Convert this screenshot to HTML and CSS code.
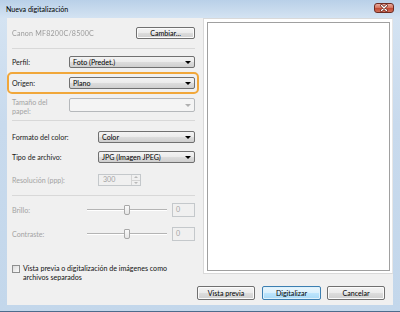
FILE: index.html
```html
<!DOCTYPE html>
<html lang="es">
<head>
    <meta charset="UTF-8">
    <meta name="viewport" content="width=device-width, initial-scale=1.0">
    <title>Nueva digitalización</title>
    <link rel="stylesheet" href="styles.css">
</head>
<body>
    <div class="window">
        <div class="titlebar">
            <span class="title">Nueva digitalización</span>
            <span class="close">
                <svg width="18" height="8" viewBox="0 0 18 8">
                    <path d="M6.5 1.5 L11.5 6.5 M11.5 1.5 L6.5 6.5" stroke="#5a1a12" stroke-width="2.6" stroke-linecap="round"/>
                    <path d="M6.5 1.5 L11.5 6.5 M11.5 1.5 L6.5 6.5" stroke="#ffffff" stroke-width="1.4" stroke-linecap="round"/>
                </svg>
            </span>
        </div>

        <div class="client">
            <div class="settings">
                <div class="device-row">
                    <span class="device">Canon MF8200C/8500C</span>
                    <button class="btn change">Cambiar...</button>
                </div>

                <div class="sep sep-top"></div>

                <div class="field perfil">
                    <span class="label">Perfil:</span>
                    <div class="combo"><span>Foto (Predet.)</span><span class="arrow"></span></div>
                </div>

                <div class="highlight">
                    <div class="field">
                        <span class="label">Origen:</span>
                        <div class="combo"><span>Plano</span><span class="arrow"></span></div>
                    </div>
                </div>

                <div class="field paper disabled">
                    <span class="label">Tamaño del<br>papel:</span>
                    <div class="combo combo-off"><span></span><span class="arrow"></span></div>
                </div>

                <div class="sep sep-mid"></div>

                <div class="field wide color">
                    <span class="label">Formato del color:</span>
                    <div class="combo"><span>Color</span><span class="arrow"></span></div>
                </div>

                <div class="field wide type">
                    <span class="label">Tipo de archivo:</span>
                    <div class="combo"><span>JPG (Imagen JPEG)</span><span class="arrow"></span></div>
                </div>

                <div class="field wide res disabled">
                    <span class="label">Resolución (ppp):</span>
                    <div class="spinner">
                        <span class="spin-value">300</span>
                        <span class="spin-buttons">
                            <span class="spin-up"></span>
                            <span class="spin-down"></span>
                        </span>
                    </div>
                </div>

                <div class="sep sep-low"></div>

                <div class="adjust bright disabled">
                    <span class="label">Brillo:</span>
                    <div class="slider">
                        <span class="track"></span>
                        <span class="thumb"></span>
                        <span class="track"></span>
                    </div>
                    <span class="edit">0</span>
                </div>

                <div class="adjust contrast disabled">
                    <span class="label">Contraste:</span>
                    <div class="slider">
                        <span class="track"></span>
                        <span class="thumb"></span>
                        <span class="track"></span>
                    </div>
                    <span class="edit">0</span>
                </div>

                <div class="check">
                    <span class="box"></span>
                    <span class="check-text">Vista previa o digitalización de imágenes como archivos separados</span>
                </div>
            </div>

            <div class="preview-pane">
                <div class="preview"></div>
            </div>

            <div class="actions">
                <button class="btn action">Vista previa</button>
                <button class="btn action default">Digitalizar</button>
                <button class="btn action">Cancelar</button>
            </div>
        </div>
    </div>
</body>
</html>
```

FILE: styles.css
```css
body {
    margin: 0;
    width: 400px;
    height: 312px;
    overflow: hidden;
    font-family: Lato, 'Noto Sans', sans-serif;
    font-size: 7.1px;
    color: #1a1a1a;
    background-color: #c6d9ec;
}

.window {
    height: 312px;
    box-sizing: border-box;
    display: flex;
    flex-direction: column;
    padding: 0 7px 6px 7px;
    background: linear-gradient(to bottom, #b9d0e8 0, #d4e3f2 18px, #c8daed 40%, #c3d7eb 100%);
    border-bottom: 1px solid #4d6c8c;
}

.titlebar {
    height: 18px;
    display: flex;
    align-items: center;
    justify-content: space-between;
}

.title {
    margin-left: -1px;
    color: #000;
}

.close {
    display: flex;
    width: 18px;
    height: 8px;
    margin-right: -1px;
    margin-top: -3px;
    border: 1px solid #6e2b21;
    border-radius: 3px;
    background: linear-gradient(to bottom, #e9a99b 0%, #d67863 45%, #c24a33 55%, #d1715a 100%);
}

.client {
    flex: 1;
    display: grid;
    grid-template-columns: 192px 1fr;
    grid-template-rows: 1fr auto;
    background-color: #f0f0f0;
}

/* left column */

.settings {
    padding: 9px 4px 0 5px;
}

.device-row {
    height: 12px;
    display: flex;
    align-items: center;
    justify-content: space-between;
}

.device {
    color: #9a9a9a;
    filter: blur(0.7px);
    letter-spacing: 0.2px;
}

.btn {
    box-sizing: border-box;
    height: 12px;
    padding: 0;
    font-family: inherit;
    font-size: 7.1px;
    color: #000;
    border: 1px solid #707070;
    border-radius: 2px;
    background: linear-gradient(to bottom, #f3f3f3 0%, #ebebeb 50%, #dddddd 50%, #cfcfcf 100%);
    box-shadow: inset 0 0 0 1px #fbfbfb;
}

.change {
    width: 59px;
}

.sep {
    height: 1px;
    background-color: #d8d8d8;
}

.sep-top {
    margin-top: 9px;
}

.sep-mid {
    margin-top: 4px;
}

.sep-low {
    margin-top: 9px;
}

.field {
    display: flex;
    align-items: center;
}

.field .label {
    width: 57px;
    flex-shrink: 0;
}

.field.wide .label {
    width: 86px;
}

.perfil {
    margin-top: 7px;
}

.highlight {
    margin: 4px -4px 0 -5px;
    padding: 3px 2px 3px 3px;
    border: 2px solid #f1a73a;
    border-radius: 5px;
}

.combo {
    flex: 1;
    height: 12px;
    box-sizing: border-box;
    display: flex;
    align-items: center;
    justify-content: space-between;
    padding: 0 3px 0 3px;
    color: #000;
    border: 1px solid #707070;
    border-radius: 2px;
    background: linear-gradient(to bottom, #f3f3f3 0%, #ebebeb 50%, #dddddd 50%, #cfcfcf 100%);
}

.arrow {
    width: 0;
    height: 0;
    border-left: 3px solid transparent;
    border-right: 3px solid transparent;
    border-top: 3px solid #000;
}

.paper {
    margin-top: 4px;
    align-items: flex-start;
    line-height: 9px;
}

.combo-off {
    height: 14px;
    border-color: #b5b8bb;
    background: #f4f4f4;
}

.combo-off .arrow {
    border-top-color: #b0b0b0;
}

.disabled .label,
.disabled .edit,
.disabled .spin-value {
    color: #a3a3a3;
}

.color {
    margin-top: 10px;
}

.type {
    margin-top: 8px;
}

.res {
    margin-top: 11px;
}

.spinner {
    width: 43px;
    height: 12px;
    box-sizing: border-box;
    display: flex;
    justify-content: space-between;
    border: 1px solid #c4c8cb;
    background-color: #f0f0f0;
}

.spin-value {
    padding-left: 4px;
    line-height: 10px;
}

.spin-buttons {
    width: 8px;
    display: flex;
    flex-direction: column;
    border-left: 1px solid #d4d4d4;
}

.spin-up,
.spin-down {
    flex: 1;
    display: flex;
    justify-content: center;
    align-items: center;
}

.spin-up {
    border-bottom: 1px solid #d4d4d4;
}

.spin-up::before {
    content: "";
    border-left: 2px solid transparent;
    border-right: 2px solid transparent;
    border-bottom: 2px solid #b8b8b8;
}

.spin-down::before {
    content: "";
    border-left: 2px solid transparent;
    border-right: 2px solid transparent;
    border-top: 2px solid #b8b8b8;
}

.adjust {
    display: flex;
    align-items: center;
    height: 14px;
}

.adjust .label {
    width: 75px;
    flex-shrink: 0;
}

.bright {
    margin-top: 7px;
}

.contrast {
    margin-top: 10px;
}

.slider {
    width: 80px;
    height: 14px;
    display: flex;
    align-items: center;
}

.track {
    flex: 1;
    height: 1px;
    background-color: #b4b4b4;
    border-bottom: 1px solid #ffffff;
}

.thumb {
    width: 6px;
    height: 10px;
    box-sizing: border-box;
    border: 1px solid #a8a8a8;
    border-radius: 1px 1px 2px 2px;
    background: linear-gradient(to bottom, #fafafa, #e6e6e6);
}

.edit {
    width: 23px;
    height: 14px;
    box-sizing: border-box;
    margin-left: 5px;
    padding-left: 3px;
    line-height: 12px;
    border: 1px solid #c4c8cb;
    background-color: #f0f0f0;
}

.check {
    margin-top: 23px;
    display: flex;
    align-items: flex-start;
    gap: 3px;
    line-height: 9px;
}

.box {
    width: 8px;
    height: 8px;
    flex-shrink: 0;
    margin-top: 1px;
    box-sizing: border-box;
    border: 1px solid #8e8f8f;
    background: linear-gradient(to bottom right, #dcdcdc, #fbfbfb);
}

.check-text {
    width: 150px;
    color: #111;
}

/* right column */

.preview-pane {
    margin: 0 0 8px 4px;
    padding: 3px 2px 2px 3px;
    border: 1px solid #d9d9d9;
    border-right: 1px solid #e6e6e6;
    background-color: #ffffff;
}

.preview {
    height: 100%;
    box-sizing: border-box;
    border: 1px solid #a0a0a0;
    background-color: #ffffff;
}

.actions {
    grid-column: 1 / -1;
    display: flex;
    justify-content: flex-end;
    gap: 6px;
    padding: 4px 8px 5px 0;
}

.action {
    width: 58px;
    height: 14px;
}

.default {
    width: 59px;
    margin-left: 1px;
    border-color: #3c7fb1;
    background: linear-gradient(to bottom, #eaf6fd 0%, #d9f0fc 50%, #bee6fd 50%, #a7d9f5 100%);
    box-shadow: inset 0 0 0 1px #dff2fc;
}
```
